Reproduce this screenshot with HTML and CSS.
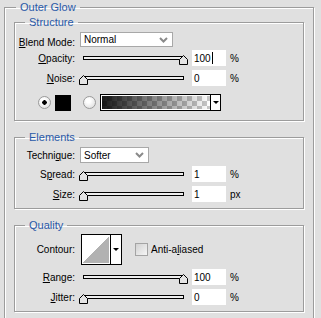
FILE: index.html
```html
<!DOCTYPE html>
<html lang="en">
<head>
    <meta charset="UTF-8">
    <meta name="viewport" content="width=device-width, initial-scale=1.0">
    <title>Outer Glow</title>
    <link rel="stylesheet" href="styles.css">
</head>
<body>

    <fieldset class="group outer">
        <legend>Outer Glow</legend>

        <fieldset class="group structure">
            <legend>Structure</legend>

            <div class="row row-blend">
                <span class="label"><u>B</u>lend Mode:</span>
                <div class="select select-blend">
                    <span>Normal</span>
                    <svg class="chevron" width="9" height="6" viewBox="0 0 9 6"><polyline points="1,1 4.5,4.5 8,1" fill="none" stroke="#8a8a8a" stroke-width="2"/></svg>
                </div>
            </div>

            <div class="row">
                <span class="label"><u>O</u>pacity:</span>
                <div class="slider">
                    <div class="track"></div>
                    <svg class="thumb" style="left: 100px" width="9" height="10" viewBox="0 0 9 10"><polygon points="4.5,0.5 8.5,4.5 8.5,9.5 0.5,9.5 0.5,4.5" fill="#e4e4e4" stroke="#000"/></svg>
                </div>
                <div class="field">100<span class="caret"></span></div>
                <span class="unit">%</span>
            </div>

            <div class="row">
                <span class="label"><u>N</u>oise:</span>
                <div class="slider">
                    <div class="track"></div>
                    <svg class="thumb" style="left: 0px" width="9" height="10" viewBox="0 0 9 10"><polygon points="4.5,0.5 8.5,4.5 8.5,9.5 0.5,9.5 0.5,4.5" fill="#e4e4e4" stroke="#000"/></svg>
                </div>
                <div class="field">0</div>
                <span class="unit">%</span>
            </div>

            <div class="row-color">
                <span class="radio checked"></span>
                <span class="swatch"></span>
                <span class="radio radio-gradient"></span>
                <div class="gradient-picker">
                    <span class="gradient"></span>
                    <span class="drop"><i class="arrow"></i></span>
                </div>
            </div>
        </fieldset>

        <fieldset class="group elements">
            <legend>Elements</legend>

            <div class="row row-technique">
                <span class="label">Techni<u>q</u>ue:</span>
                <div class="select select-technique">
                    <span>Softer</span>
                    <svg class="chevron" width="9" height="6" viewBox="0 0 9 6"><polyline points="1,1 4.5,4.5 8,1" fill="none" stroke="#8a8a8a" stroke-width="2"/></svg>
                </div>
            </div>

            <div class="row">
                <span class="label">S<u>p</u>read:</span>
                <div class="slider">
                    <div class="track"></div>
                    <svg class="thumb" style="left: 0px" width="9" height="10" viewBox="0 0 9 10"><polygon points="4.5,0.5 8.5,4.5 8.5,9.5 0.5,9.5 0.5,4.5" fill="#e4e4e4" stroke="#000"/></svg>
                </div>
                <div class="field">1</div>
                <span class="unit">%</span>
            </div>

            <div class="row">
                <span class="label"><u>S</u>ize:</span>
                <div class="slider">
                    <div class="track"></div>
                    <svg class="thumb" style="left: 0px" width="9" height="10" viewBox="0 0 9 10"><polygon points="4.5,0.5 8.5,4.5 8.5,9.5 0.5,9.5 0.5,4.5" fill="#e4e4e4" stroke="#000"/></svg>
                </div>
                <div class="field">1</div>
                <span class="unit">px</span>
            </div>
        </fieldset>

        <fieldset class="group quality">
            <legend>Quality</legend>

            <div class="row row-contour">
                <span class="label">Contour:</span>
                <div class="contour">
                    <span class="contour-preview"></span>
                    <span class="drop"><i class="arrow"></i></span>
                </div>
                <span class="checkbox"></span>
                <span class="check-label">Anti-a<u>l</u>iased</span>
            </div>

            <div class="row row-range">
                <span class="label"><u>R</u>ange:</span>
                <div class="slider">
                    <div class="track"></div>
                    <svg class="thumb" style="left: 100px" width="9" height="10" viewBox="0 0 9 10"><polygon points="4.5,0.5 8.5,4.5 8.5,9.5 0.5,9.5 0.5,4.5" fill="#e4e4e4" stroke="#000"/></svg>
                </div>
                <div class="field">100</div>
                <span class="unit">%</span>
            </div>

            <div class="row">
                <span class="label"><u>J</u>itter:</span>
                <div class="slider">
                    <div class="track"></div>
                    <svg class="thumb" style="left: 0px" width="9" height="10" viewBox="0 0 9 10"><polygon points="4.5,0.5 8.5,4.5 8.5,9.5 0.5,9.5 0.5,4.5" fill="#e4e4e4" stroke="#000"/></svg>
                </div>
                <div class="field">0</div>
                <span class="unit">%</span>
            </div>
        </fieldset>
    </fieldset>

</body>
</html>
```

FILE: styles.css
```css
body {
    margin: 0;
    background-color: #e0e0e0;
    font-family: 'Liberation Sans', Arial, sans-serif;
    font-size: 10px;
    color: #000;
}

u {
    text-decoration: underline;
    text-underline-offset: 1px;
}

/* group boxes */

.group {
    margin: 0;
    padding: 0 0 4px;
    border: 1px solid #9c9c9c;
    box-shadow: 1px 1px 0 #fff, inset 1px 1px 0 #fff;
    min-width: 0;
}

.group + .group {
    margin-top: 9px;
}

.group legend {
    margin-left: 10px;
    padding: 0 4px;
    font-size: 11px;
    line-height: 15px;
    color: #2859a8;
}

.outer {
    box-sizing: border-box;
    width: 310px;
    margin-left: 4px;
    padding: 0 9px 10px;
}

.outer > legend {
    margin-left: 2px;
}

.structure {
    padding-bottom: 9px;
}

/* rows */

.row {
    display: flex;
    align-items: center;
    height: 20px;
}

.label {
    width: 60px;
    margin-right: 5px;
    text-align: right;
    white-space: nowrap;
}

.row-blend {
    height: 18px;
    align-items: flex-end;
}

.row-technique {
    height: 18px;
    padding-top: 1px;
}

.row-contour {
    height: 31px;
    margin-top: 1px;
}

.row-range {
    margin-top: 2px;
}

/* dropdowns */

.select {
    box-sizing: border-box;
    display: flex;
    align-items: center;
    justify-content: space-between;
    height: 15px;
    padding: 0 4px 0 3px;
    background-color: #fff;
    border: 1px solid #a8a8a8;
}

.select-blend {
    width: 93px;
    margin-bottom: 1px;
}

.select-technique {
    width: 69px;
    height: 16px;
}

.chevron {
    display: block;
}

/* sliders */

.slider {
    position: relative;
    width: 109px;
    height: 4px;
    margin-left: -1px;
}

.track {
    width: 99px;
    height: 2px;
    margin-left: 4px;
    background-color: #eeeeee;
    border: 1px solid #000;
}

.thumb {
    position: absolute;
    top: -1px;
    display: block;
}

.field {
    box-sizing: border-box;
    display: flex;
    align-items: center;
    width: 34px;
    height: 16px;
    margin-left: 4px;
    padding-left: 2px;
    background-color: #fff;
}

.caret {
    width: 1px;
    height: 12px;
    margin-left: 1px;
    background-color: #000;
}

.unit {
    margin-left: 4px;
}

/* colour row */

.row-color {
    display: flex;
    align-items: center;
    height: 17px;
    margin-top: 6px;
}

.radio {
    box-sizing: border-box;
    width: 13px;
    height: 13px;
    margin-left: 23px;
    border: 1px solid #9a9a9a;
    border-radius: 50%;
    background: radial-gradient(circle at 40% 35%, #fff 20%, #d6d6d6 100%);
}

.radio.checked {
    background: radial-gradient(circle, #000 0 2px, transparent 2.5px), radial-gradient(circle at 40% 35%, #fff 20%, #d6d6d6 100%);
}

.radio-gradient {
    margin-left: 12px;
}

.swatch {
    width: 16px;
    height: 16px;
    margin-left: 4px;
    background-color: #000;
}

.gradient-picker {
    box-sizing: border-box;
    display: flex;
    width: 121px;
    height: 17px;
    margin-left: 4px;
    border: 1px solid #000;
}

.gradient {
    flex: 1;
    border: 1px solid #fff;
    border-right: none;
    background:
        linear-gradient(to right, rgba(0, 0, 0, 0.9), rgba(0, 0, 0, 0)),
        conic-gradient(#c8c8c8 25%, #fff 0 50%, #c8c8c8 0 75%, #fff 0) 0 0 / 10px 10px;
}

.drop {
    display: flex;
    align-items: center;
    justify-content: center;
    width: 9px;
    background-color: #fff;
    border-left: 1px solid #000;
}

.arrow {
    width: 0;
    height: 0;
    border-left: 3px solid transparent;
    border-right: 3px solid transparent;
    border-top: 3px solid #000;
}

/* quality */

.contour {
    box-sizing: border-box;
    display: flex;
    width: 41px;
    height: 31px;
    margin-left: 1px;
    border: 1px solid #000;
}

.contour-preview {
    flex: 1;
    border: 1px solid #fff;
    background: linear-gradient(to top left, #b2b2b2 50%, #fff 50%);
}

.contour .drop {
    width: 10px;
}

.checkbox {
    box-sizing: border-box;
    width: 13px;
    height: 13px;
    margin-left: 13px;
    border: 1px solid #a4a4a4;
    background: linear-gradient(135deg, #d2d2d2, #f6f6f6);
}

.check-label {
    margin-left: 3px;
}
```
